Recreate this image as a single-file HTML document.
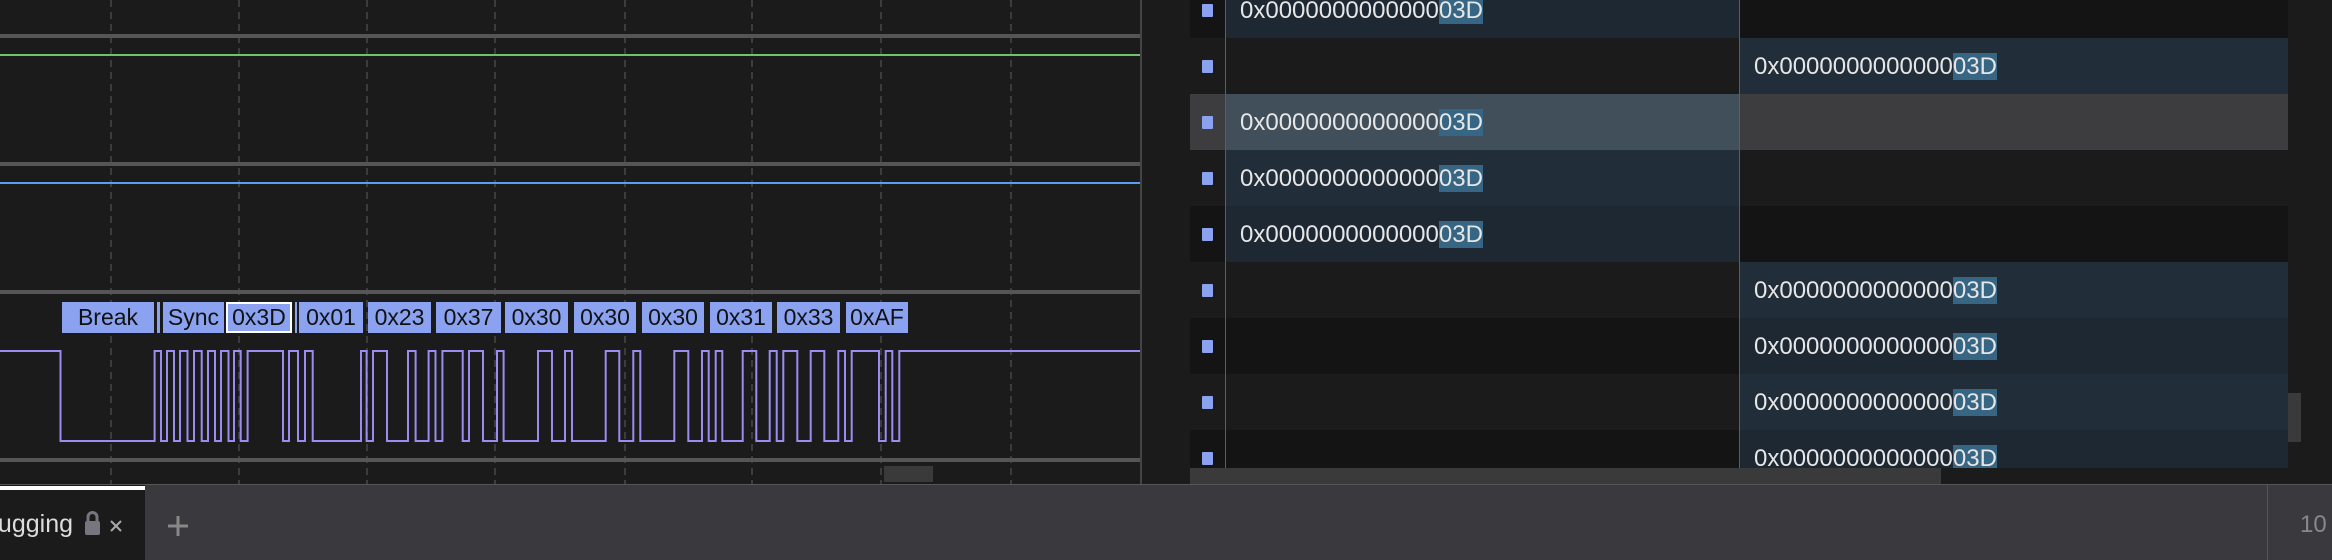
<!DOCTYPE html>
<html><head><meta charset="utf-8"><style>
*{margin:0;padding:0;box-sizing:border-box}
body{width:2332px;height:560px;overflow:hidden;background:#1b1b1b;position:relative;font-family:"Liberation Sans",sans-serif}
.abs{position:absolute}
.trk{position:absolute;left:0;width:1140px;height:4px;background:#555558}
.lbl{position:absolute;top:302px;height:31px;background:#8aa2f0;color:#111;font-size:23px;line-height:31px;text-align:center;overflow:hidden}
.row{position:absolute;left:1190px;width:1098px;height:56px}
.c{position:absolute;top:0;height:56px;font-size:24px;color:#e6e6e6;line-height:58px;padding-left:15px;white-space:nowrap}
.c1{left:35px;width:514px}
.c2{left:549px;width:549px}
.h{background:#366684}
.mk{position:absolute;left:12px;top:22px;width:11px;height:13px;background:#8aa2f0;border-radius:1px}
</style></head><body>
<svg class="abs" style="left:0;top:0" width="1140" height="484">
<g stroke="#3c3c3c" stroke-width="2" stroke-dasharray="7 5">
<line x1="111" y1="0" x2="111" y2="484"/><line x1="239" y1="0" x2="239" y2="484"/><line x1="367" y1="0" x2="367" y2="484"/><line x1="495" y1="0" x2="495" y2="484"/><line x1="625" y1="0" x2="625" y2="484"/><line x1="752" y1="0" x2="752" y2="484"/><line x1="881" y1="0" x2="881" y2="484"/><line x1="1011" y1="0" x2="1011" y2="484"/>
</g>
<path id="wave" fill="none" stroke="#9b8cf2" stroke-width="2" d=""/>
</svg>
<div class="trk" style="top:34px"></div>
<div class="abs" style="left:0;top:54px;width:1140px;height:2px;background:#6fc46a"></div>
<div class="trk" style="top:162px"></div>
<div class="abs" style="left:0;top:182px;width:1140px;height:2px;background:#5b9ef0"></div>
<div class="trk" style="top:290px"></div>
<div class="trk" style="top:458px"></div>
<div class="abs" style="left:884px;top:466px;width:49px;height:16px;background:#3a3a3a"></div>
<div class="lbl" style="left:62px;width:92px">Break</div>
<div class="lbl" style="left:157px;width:3px"></div>
<div class="lbl" style="left:163px;width:61px">Sync</div>
<div class="lbl" style="left:226px;width:66px;border:2px solid #fff;line-height:27px">0x3D</div>
<div class="lbl" style="left:295px;width:2px"></div>
<div class="lbl" style="left:299px;width:64px">0x01</div>
<div class="lbl" style="left:368px;width:63px">0x23</div>
<div class="lbl" style="left:436px;width:65px">0x37</div>
<div class="lbl" style="left:505px;width:63px">0x30</div>
<div class="lbl" style="left:574px;width:62px">0x30</div>
<div class="lbl" style="left:642px;width:62px">0x30</div>
<div class="lbl" style="left:710px;width:62px">0x31</div>
<div class="lbl" style="left:777px;width:63px">0x33</div>
<div class="lbl" style="left:846px;width:62px">0xAF</div>
<div class="abs" style="left:1140px;top:0;width:2px;height:484px;background:#444"></div>
<div class="abs" style="left:1190px;top:0;width:35px;height:468px;background:#1b1b1b"></div>
<div id="rows"></div>
<div class="abs" style="left:1225px;top:0;width:1px;height:468px;background:#56606a"></div>
<div class="abs" style="left:1739px;top:0;width:1px;height:468px;background:#56606a"></div>
<div class="abs" style="left:1190px;top:468px;width:751px;height:16px;background:#3a3a3a"></div>
<div class="abs" style="left:2288px;top:393px;width:13px;height:49px;background:#3a3a3a"></div>
<div class="abs" style="left:0;top:484px;width:2332px;height:76px;background:#39393e;border-top:1px solid #555"></div>
<div class="abs" style="left:0;top:485px;width:145px;height:75px;background:#1b1b1b"></div>
<div class="abs" style="left:0;top:486px;width:145px;height:4px;background:#fff"></div>
<div class="abs" style="left:0;top:509px;font-size:25px;color:#ddd;line-height:30px;direction:rtl;overflow:hidden;white-space:nowrap;width:73px">ugging</div>
<svg class="abs" style="left:84px;top:510px" width="17" height="26"><path d="M4 11V7a4.5 4.5 0 0 1 9 0v4" fill="none" stroke="#76767e" stroke-width="3"/><rect x="1" y="11" width="15" height="14" rx="2" fill="#76767e"/></svg>
<svg class="abs" style="left:109px;top:519px" width="14" height="14"><path d="M2 2L12 12M12 2L2 12" stroke="#aaa" stroke-width="2"/></svg>
<svg class="abs" style="left:167px;top:515px" width="22" height="22"><path d="M11 1V21M1 11H21" stroke="#888" stroke-width="3"/></svg>
<div class="abs" style="left:2267px;top:485px;width:1px;height:75px;background:#555"></div>
<div class="abs" style="left:2300px;top:510px;font-size:24px;color:#888;line-height:30px">10</div>
<script>
var xs=[60.5,154.6,161,167,174,180,187.5,194,201.7,208,215,221,228.5,234,240.7,247.6,283,289,298,305,312.7,361,366.6,373,387,408,415.6,428.6,435.5,442.4,462.7,469,483,497,503.6,538,552,565,572,605.7,619.3,633.3,640.3,674.3,688.3,702,708.7,715.7,722.3,742.7,756.3,769.7,776.7,783.3,797.3,810.7,824.3,838.3,845,851.7,879,885.7,892.3,899.3];
var H=351,L=441,y=H,d="M0 "+H;
xs.forEach(function(x){d+=" L"+x+" "+y;y=(y==H?L:H);d+=" L"+x+" "+y;});
d+=" L1140 "+y;document.getElementById('wave').setAttribute('d',d);
var rows=[1,2,1,1,1,2,2,2,2];
var h='',txt='0x0000000000000<span class="h">03D</span>';
rows.forEach(function(r,i){var top=-18+i*56,even=(i%2==0);
var base=even?'#141414':'#1b1b1b',blue=even?'#1d2833':'#212d38';
var hl=(i==2);
var c1=r==1?(hl?'#414f5a':blue):(hl?'#3d3d3f':base);
var c2=r==2?blue:(hl?'#3d3d3f':base);
var mc=hl?'#3d3d3f':base;
h+='<div class="row" style="top:'+top+'px;background:'+mc+'"><div class="mk"></div>'+
'<div class="c c1" style="background:'+c1+'">'+(r==1?txt:'')+'</div>'+
'<div class="c c2" style="background:'+c2+'">'+(r==2?txt:'')+'</div></div>';});
var R=document.getElementById('rows');R.innerHTML=h;R.style.cssText='position:absolute;left:0;top:0;width:2332px;height:468px;overflow:hidden';
</script>
</body></html>
